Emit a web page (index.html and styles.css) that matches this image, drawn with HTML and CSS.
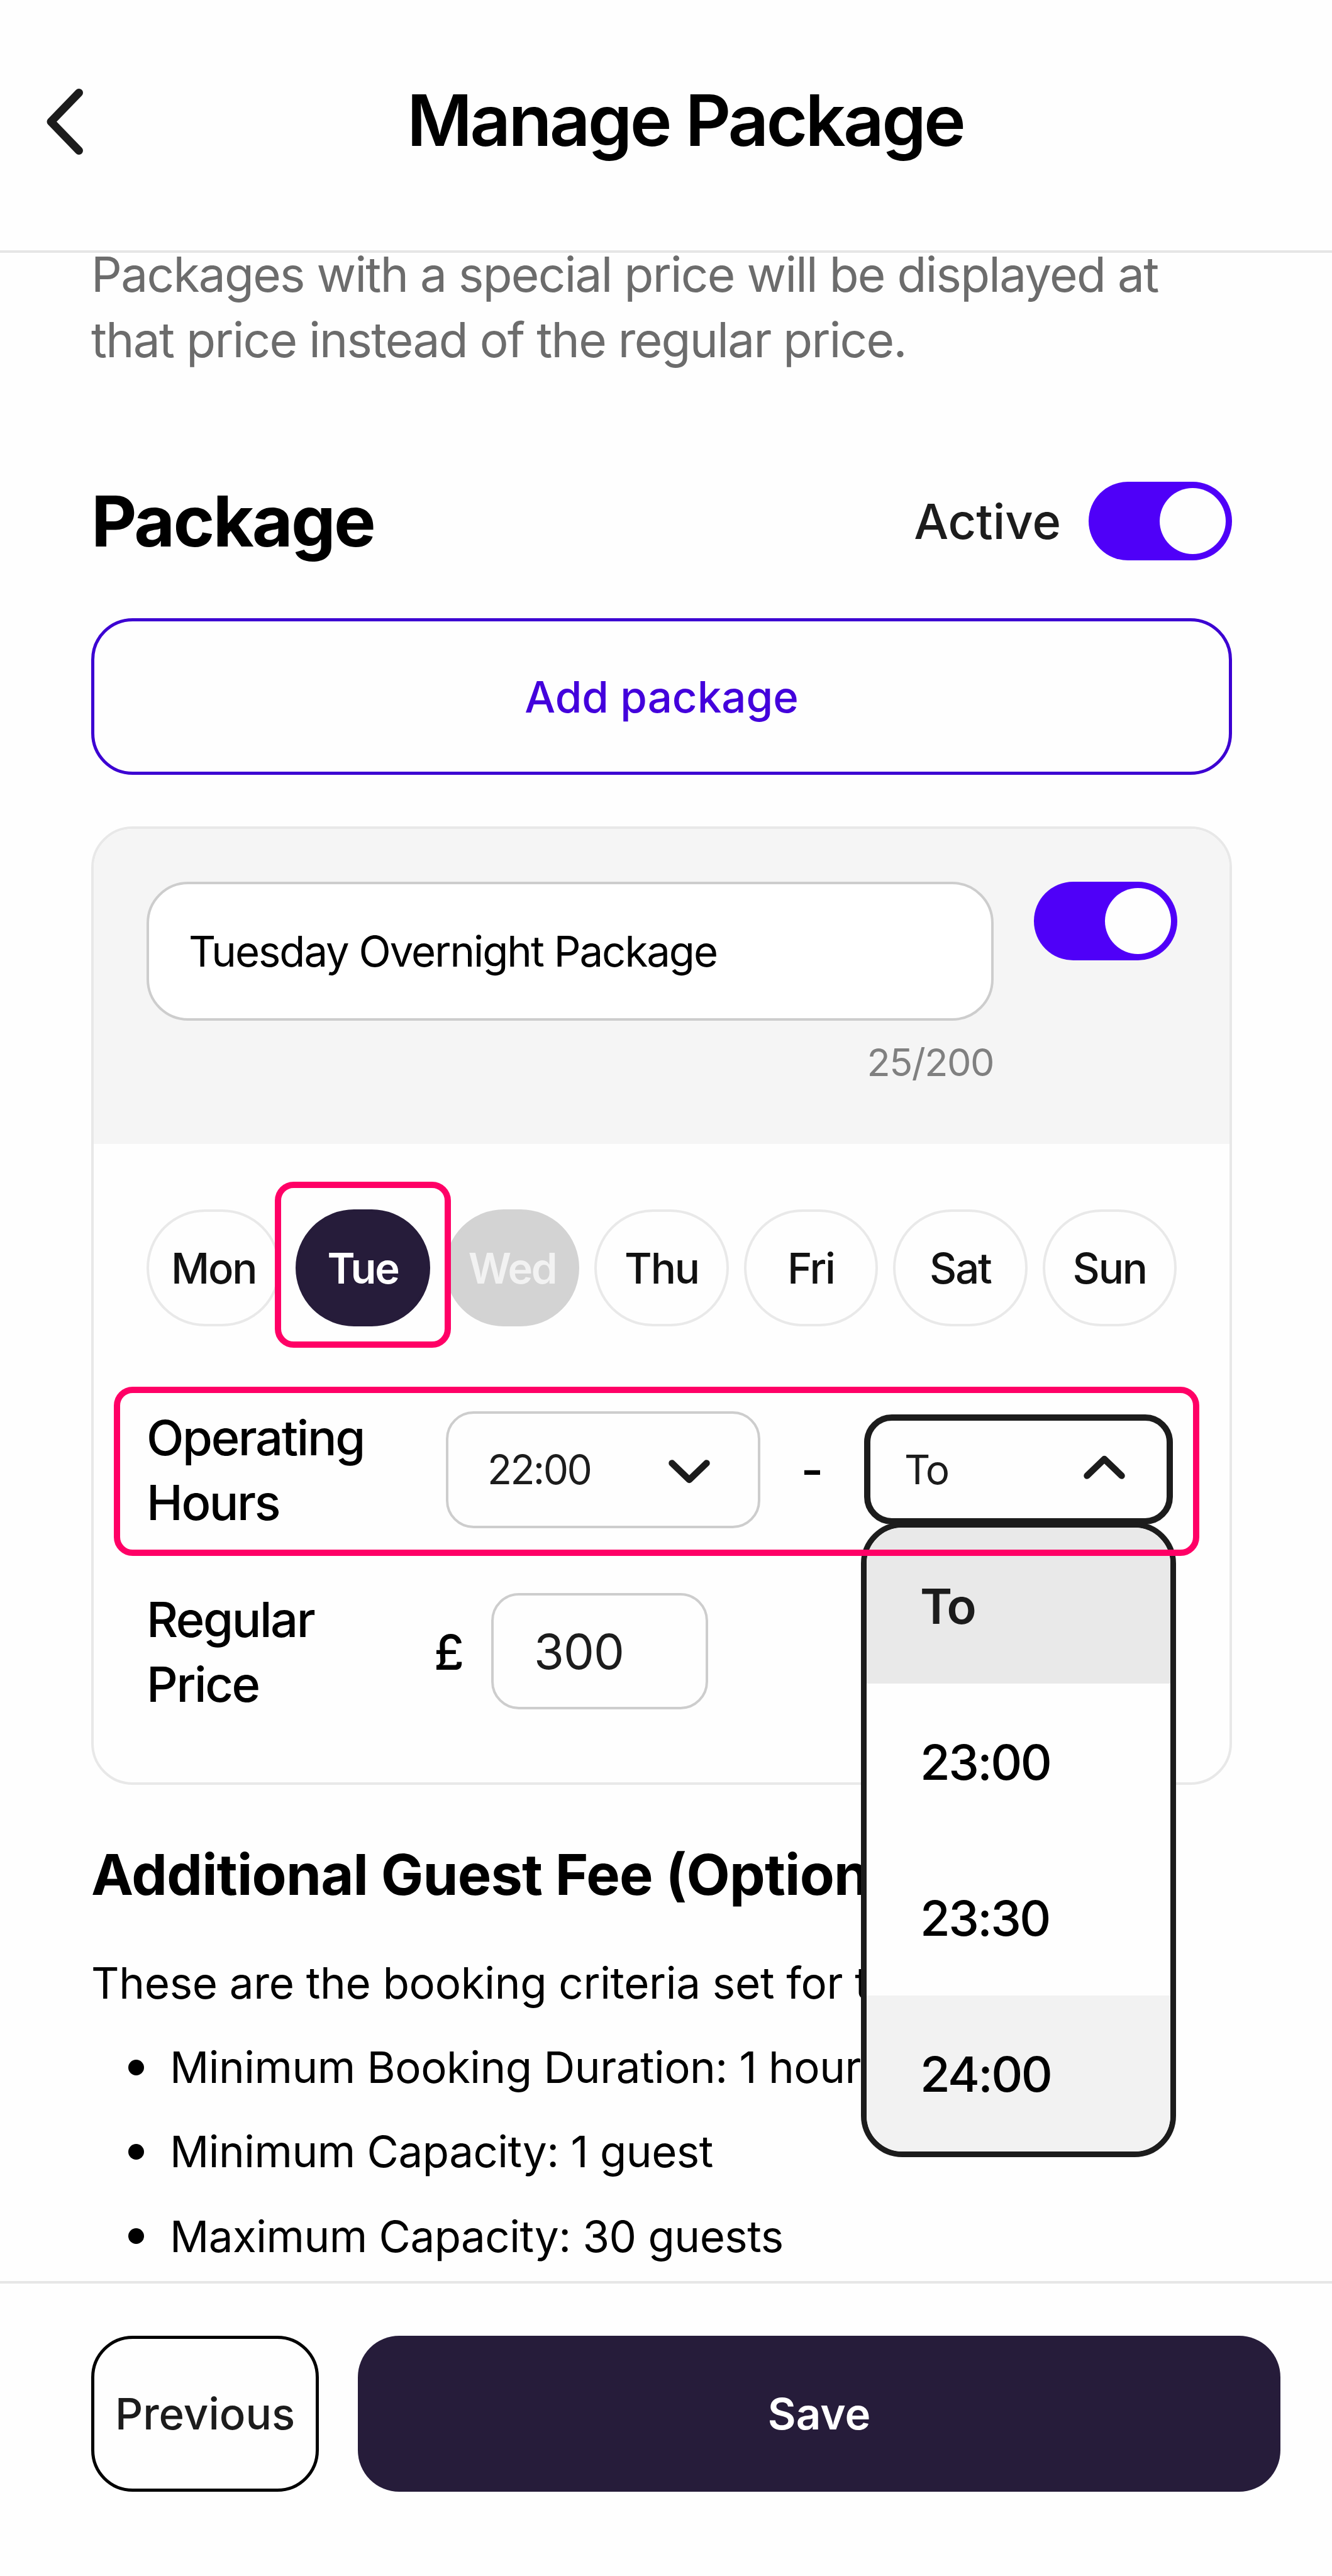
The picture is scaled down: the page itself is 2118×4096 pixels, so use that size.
FILE: index.html
```html
<!DOCTYPE html>
<html lang="en">
<head>
  <meta charset="UTF-8" />
  <meta name="viewport" content="width=device-width, initial-scale=1.0"/>
  <title>Manage Package</title>
  <link rel="stylesheet" href="styles.css">
</head>
<body>
  <header class="header">
    <a class="back" aria-label="Back">
      <svg width="58" height="105" viewBox="0 0 58 105"><path d="M51.5 6.5 L7 52.5 L51.5 98.5" /></svg>
    </a>
    <h1 class="title">Manage Package</h1>
  </header>

  <main class="content">
    <p class="intro">Packages with a special price will be displayed at<br>that price instead of the regular price.</p>

    <div class="section-head">
      <h2 class="section-title">Package</h2>
      <span class="active-label">Active</span>
      <span class="toggle"><span class="knob"></span></span>
    </div>

    <button class="btn-add">Add package</button>

    <section class="card">
      <div class="card-head">
        <div class="name-field">
          <div class="name-input">Tuesday Overnight Package</div>
          <span class="counter">25/200</span>
        </div>
        <span class="toggle"><span class="knob"></span></span>
      </div>

      <div class="card-body">
        <div class="days">
          <span class="day">Mon</span>
          <span class="day selected">Tue</span>
          <span class="day disabled">Wed</span>
          <span class="day">Thu</span>
          <span class="day">Fri</span>
          <span class="day">Sat</span>
          <span class="day">Sun</span>
        </div>

        <div class="row hours">
          <span class="label">Operating<br>Hours</span>
          <div class="select from">
            <span>22:00</span>
            <svg class="chevron" width="66" height="39" viewBox="0 0 66 39"><path d="M5.5 5.5 L33 32 L60.5 5.5" /></svg>
          </div>
          <span class="dash">-</span>
          <div class="select to">
            <span>To</span>
            <svg class="chevron" width="66" height="39" viewBox="0 0 66 39"><path d="M5.5 33.5 L33 7 L60.5 33.5" /></svg>
            <div class="menu">
              <span class="option current">To</span>
              <span class="option">23:00</span>
              <span class="option">23:30</span>
              <span class="option hover">24:00</span>
            </div>
          </div>
        </div>

        <div class="row price">
          <span class="label">Regular<br>Price</span>
          <span class="currency">£</span>
          <div class="price-input">300</div>
        </div>
      </div>
    </section>

    <h3 class="fee-title">Additional Guest Fee (Optional)</h3>
    <p class="fee-text">These are the booking criteria set for this</p>
    <ul class="criteria">
      <li>Minimum Booking Duration: 1 hour</li>
      <li>Minimum Capacity: 1 guest</li>
      <li>Maximum Capacity: 30 guests</li>
    </ul>
  </main>

  <footer class="footer">
    <button class="btn-previous">Previous</button>
    <button class="btn-save">Save</button>
  </footer>
</body>
</html>
```
FILE: styles.css
```css
* {
  margin: 0;
  padding: 0;
  box-sizing: border-box;
  font-family: Inter, "Liberation Sans", sans-serif;
}

body {
  display: flex;
  flex-direction: column;
  width: 2118px;
  height: 4096px;
  overflow: hidden;
  background-color: #fefefe;
  color: #000;
  font-size: 69px;
}

.header {
  display: grid;
  grid-template-columns: 151px 1fr 90px;
  align-items: center;
  height: 402px;
  flex: none;
  padding-bottom: 16px;
  border-bottom: 4px solid #e6e6e6;
}

.back {
  display: block;
  height: 105px;
  margin-top: 5px;
  padding-left: 74px;
}

svg {
  display: block;
}

svg path {
  fill: none;
  stroke: #1c1c1c;
  stroke-width: 13;
  stroke-linecap: round;
  stroke-linejoin: round;
}

.chevron path {
  stroke-width: 10.5;
}

.title {
  text-align: center;
  font-size: 113px;
  font-weight: 600;
  letter-spacing: -3.8px;
  white-space: nowrap;
}

.content {
  flex: none;
  height: 3225px;
  padding: 0 159px 0 145px;
}

.intro {
  margin-top: -17px;
  color: #6c6c6c;
  font-size: 76.5px;
  letter-spacing: -1.7px;
  line-height: 103.5px;
  white-space: nowrap;
}

.section-head {
  display: flex;
  align-items: center;
  height: 125px;
  margin-top: 174px;
}

.section-title {
  flex: 1;
  font-size: 112px;
  font-weight: 700;
  letter-spacing: -2.8px;
  line-height: 125px;
}

.active-label {
  margin-right: 44px;
  color: #1c1c1c;
  font-size: 77.6px;
  font-weight: 500;
}

.toggle {
  display: flex;
  flex: none;
  justify-content: flex-end;
  align-items: center;
  width: 228px;
  height: 125px;
  padding-right: 10px;
  border-radius: 63px;
  background-color: #4f00f8;
}

.knob {
  width: 105px;
  height: 105px;
  border-radius: 50%;
  background-color: #fefefe;
}

.btn-add {
  display: block;
  width: 100%;
  height: 249px;
  margin-top: 92px;
  border: 5px solid #3c00d2;
  border-radius: 66px;
  background: none;
  color: #4300dc;
  font-size: 69px;
  font-weight: 500;
}

.card {
  height: 1524px;
  margin-top: 82px;
  border: 4px solid #e8e8e8;
  border-radius: 66px;
}

.card-head {
  display: flex;
  justify-content: space-between;
  height: 501px;
  padding: 84px 83px 0 84px;
  border-radius: 62px 62px 0 0;
  background-color: #f5f5f5;
}

.name-field {
  width: 1347px;
}

.name-input {
  display: flex;
  align-items: center;
  height: 221px;
  padding: 0 63px;
  border: 4px solid #cdcdcd;
  border-radius: 66px;
  background-color: #fff;
  font-size: 67px;
  letter-spacing: -2px;
}

.counter {
  display: block;
  margin-top: 23px;
  color: #808080;
  font-size: 61px;
  letter-spacing: -1.5px;
  line-height: 87px;
  text-align: right;
}

.card-body {
  padding: 104px 84px 0;
}

.days {
  display: flex;
  gap: 24px;
}

.day {
  display: flex;
  flex: 1;
  justify-content: center;
  align-items: center;
  position: relative;
  height: 186px;
  border: 4px solid #e9e9e9;
  border-radius: 93px;
  color: #111;
  font-size: 67px;
  font-weight: 500;
  letter-spacing: -2.2px;
}

.day.selected {
  border-color: #261c3a;
  background-color: #261c3a;
  color: #fff;
  font-weight: 600;
}

.day.disabled {
  border-color: #d3d3d3;
  background-color: #d3d3d3;
  color: #f2f2f2;
  font-weight: 600;
}

/* highlight frames */
.day.selected::after,
.hours::after {
  content: "";
  position: absolute;
  z-index: 3;
  border: 10px solid #ff0066;
  border-radius: 30px;
}

.day.selected::after {
  inset: -48px -37px -38px;
}

.row {
  display: flex;
  align-items: center;
  position: relative;
  height: 207px;
}

.hours {
  margin-top: 124px;
}

.hours::after {
  inset: -28px -36px -34px -52px;
}

.price {
  margin-top: 82px;
}

.label {
  width: 476px;
  padding-top: 3px;
  font-size: 77.6px;
  font-weight: 500;
  letter-spacing: -2.4px;
  line-height: 103.5px;
}

.select {
  display: flex;
  justify-content: space-between;
  align-items: center;
  border-radius: 44px;
  color: #1c1c1c;
  font-size: 64px;
  letter-spacing: -2.6px;
}

.from {
  width: 500px;
  height: 186px;
  padding: 0 76px 0 62px;
  border: 4px solid #cdcdcd;
}

.dash {
  width: 165px;
  text-align: center;
  font-size: 77.6px;
  font-weight: 500;
}

.to {
  position: relative;
  width: 491px;
  height: 175px;
  padding: 0 66px 0 54px;
  border: 10px solid #1c1c1c;
  background-color: #fefefe;
}

.from .chevron {
  margin-top: 8px;
}

.to .chevron {
  margin-bottom: 8px;
}

.menu {
  position: absolute;
  z-index: 2;
  top: 161px;
  left: -15px;
  width: 501px;
  border: 9px solid #1c1c1c;
  border-radius: 66px;
  background-color: #fefefe;
  overflow: hidden;
}

.option {
  display: block;
  height: 248px;
  padding-top: 2px;
  padding-left: 85px;
  color: #000;
  font-size: 77.6px;
  font-weight: 500;
  letter-spacing: -2.6px;
  line-height: 246px;
}

.option.current {
  background-color: #e9e9e9;
  color: #1c1c1c;
  font-weight: 600;
}

.option.hover {
  background-color: #f2f2f2;
}

.price .label {
  width: 457px;
}

.currency {
  width: 91px;
  padding-top: 2px;
  font-size: 77.6px;
  font-weight: 500;
}

.price-input {
  width: 345px;
  height: 185px;
  padding-left: 64px;
  border: 4px solid #cdcdcd;
  border-radius: 44px;
  color: #1c1c1c;
  font-size: 77.6px;
  letter-spacing: -1px;
  line-height: 179px;
}

.fee-title {
  margin-top: 88px;
  font-size: 90px;
  font-weight: 700;
  letter-spacing: -0.8px;
  line-height: 110px;
  white-space: nowrap;
}

.fee-text {
  margin-top: 65px;
  letter-spacing: -0.3px;
  line-height: 104px;
  white-space: nowrap;
}

.criteria {
  margin-top: 30px;
  list-style: none;
}

.criteria li {
  display: flex;
  align-items: center;
  height: 104px;
  margin-bottom: 30.4px;
  padding-left: 59px;
  letter-spacing: -0.5px;
  white-space: nowrap;
}

.criteria li::before {
  content: "";
  width: 25px;
  height: 25px;
  margin-right: 41px;
  border-radius: 50%;
  background-color: #000;
}

.footer {
  display: flex;
  flex: 1;
  align-items: flex-start;
  gap: 62px;
  padding: 83px 82px 0 145px;
  border-top: 4px solid #e6e6e6;
}

.footer button {
  height: 248px;
  border-radius: 66px;
  font-size: 69px;
}

.btn-previous {
  width: 362px;
  border: 5px solid #000;
  background: none;
  color: #1c1c1c;
  font-weight: 500;
}

.btn-save {
  flex: 1;
  border: none;
  background-color: #261c3a;
  color: #fff;
  font-weight: 600;
}
```
